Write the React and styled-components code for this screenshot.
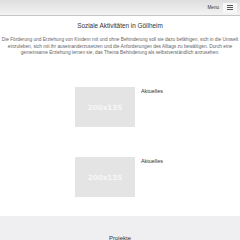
import React from 'react';
import styled, { createGlobalStyle } from 'styled-components';

const GlobalStyle = createGlobalStyle`
  html, body {
    margin: 0;
    padding: 0;
    background: #ffffff;
    font-family: "Liberation Sans", Arial, sans-serif;
  }
`;

const Page = styled.div`
  width: 240px;
  height: 240px;
  overflow: hidden;
  display: flex;
  flex-direction: column;
`;

const Header = styled.header`
  height: 15px;
  flex-shrink: 0;
  display: flex;
  align-items: center;
  justify-content: flex-end;
  padding-right: 3px;
  background: linear-gradient(#dedede, #f3f3f3);
  border-bottom: 1px solid #c6c6c6;
`;

const MenuLabel = styled.span`
  font-size: 4.6px;
  color: #333333;
  margin-right: 4px;
`;

const MenuButton = styled.button`
  width: 14px;
  height: 10px;
  padding: 0;
  border: none;
  border-radius: 1px;
  background: #f7f7f7;
  display: flex;
  flex-direction: column;
  align-items: center;
  justify-content: center;
  gap: 1.2px;

  span {
    display: block;
    width: 6px;
    height: 0.9px;
    background: #555555;
  }
`;

const Title = styled.h1`
  margin: 6px 0 0;
  font-size: 6.4px;
  font-weight: normal;
  text-align: center;
  color: #333333;
  line-height: 8px;
`;

const Intro = styled.p`
  margin: 7px 0 0;
  font-size: 4.75px;
  line-height: 6.7px;
  text-align: center;
  color: #666666;
  white-space: nowrap;
`;

const List = styled.div`
  margin-top: 30px;
  display: flex;
  flex-direction: column;
  gap: 30px;
`;

const Item = styled.div`
  display: flex;
  justify-content: center;
  align-items: flex-start;
  gap: 6px;
`;

const Placeholder = styled.div`
  width: 60px;
  height: 40px;
  background: #e4e4e4;
  display: flex;
  align-items: center;
  justify-content: center;
  color: #f6f6f6;
  font-family: "DejaVu Sans", sans-serif;
  font-weight: bold;
  font-size: 7.2px;
`;

const ItemTitle = styled.div`
  font-size: 5.4px;
  color: #333333;
  padding-top: 1px;
  width: 24px;
`;

const Footer = styled.div`
  margin-top: 19px;
  flex: 1;
  background: #efeff1;
  display: flex;
  justify-content: center;
  padding-top: 19px;
  font-size: 6px;
  color: #333333;
`;

const items = ['Aktuelles', 'Aktuelles'];

export default function App() {
  return (
    <>
      <GlobalStyle />
      <Page>
        <Header>
          <MenuLabel>Menu</MenuLabel>
          <MenuButton aria-label="Menu">
            <span />
            <span />
            <span />
          </MenuButton>
        </Header>
        <Title>Soziale Aktivitäten in Göllheim</Title>
        <Intro>
          Die Förderung und Erziehung von Kindern mit und ohne Behinderung soll sie dazu befähigen, sich in die Umwelt
          <br />
          einzuleben, sich mit ihr auseinanderzusetzen und die Anforderungen des Alltags zu bewältigen. Durch eine
          <br />
          gemeinsame Erziehung lernen sie, das Thema Behinderung als selbstverständlich anzusehen.
        </Intro>
        <List>
          {items.map((title, i) => (
            <Item key={i}>
              <Placeholder>200x135</Placeholder>
              <ItemTitle>{title}</ItemTitle>
            </Item>
          ))}
        </List>
        <Footer>Projekte</Footer>
      </Page>
    </>
  );
}
